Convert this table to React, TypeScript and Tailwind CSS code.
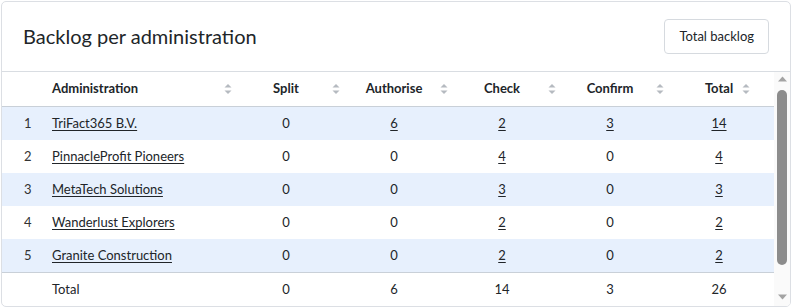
import React from "react";

const rows = [
  { n: 1, name: "TriFact365 B.V.", split: 0, auth: 6, check: 2, confirm: 3, total: 14 },
  { n: 2, name: "PinnacleProfit Pioneers", split: 0, auth: 0, check: 4, confirm: 0, total: 4 },
  { n: 3, name: "MetaTech Solutions", split: 0, auth: 0, check: 3, confirm: 0, total: 3 },
  { n: 4, name: "Wanderlust Explorers", split: 0, auth: 0, check: 2, confirm: 0, total: 2 },
  { n: 5, name: "Granite Construction", split: 0, auth: 0, check: 2, confirm: 0, total: 2 },
];

const grid = "grid grid-cols-[38px_192px_108px_108px_108px_108px_110px]";

function SortIcon() {
  return (
    <svg width="8" height="12" viewBox="0 0 8 12" className="block">
      <path d="M0.5 4.5 L4 1 L7.5 4.5 Z" fill="#b5bac0" />
      <path d="M0.5 7.5 L4 11 L7.5 7.5 Z" fill="#b5bac0" />
    </svg>
  );
}

function Val({ v, link }: { v: number; link: boolean }) {
  return (
    <div className="flex items-center justify-center">
      {link && v !== 0 ? <a className="underline underline-offset-2 cursor-pointer">{v}</a> : <span>{v}</span>}
    </div>
  );
}

function Head({ label, iconRight, align = "center" }: { label: string; iconRight: string; align?: "center" | "left" }) {
  return (
    <div className={`relative flex items-center ${align === "center" ? "justify-center" : "justify-start pl-[12px]"}`}>
      <span className="font-bold">{label}</span>
      <span className={`absolute top-1/2 -translate-y-1/2 ${iconRight}`}>
        <SortIcon />
      </span>
    </div>
  );
}

export default function App() {
  return (
    <div className="p-px" style={{ fontFamily: "Lato, 'Open Sans', sans-serif" }}>
      <div className="border border-[#dcdfe4] rounded-[5px] bg-white text-[#212529] overflow-hidden">
        <div className="h-[70px] border-b border-[#d9dde2] flex items-center justify-between pl-[21px] pr-[21px]">
          <h2 className="text-[20px] leading-none pb-[1px]">Backlog per administration</h2>
          <button className="h-[35px] px-[14px] border border-[#d6dadf] rounded-[4px] text-[13px] bg-white text-[#212529]">
            Total backlog
          </button>
        </div>
        <div className="flex text-[13px]">
          <div className="w-[772px]">
            <div className={`${grid} h-[35px] border-b border-[#c9d0d8]`}>
              <div />
              <Head label="Administration" align="left" iconRight="right-[0px]" />
              <Head label="Split" iconRight="right-[0px]" />
              <Head label="Authorise" iconRight="right-[0px]" />
              <Head label="Check" iconRight="right-[0px]" />
              <Head label="Confirm" iconRight="right-[0px]" />
              <Head label="Total" iconRight="right-[24px]" />
            </div>
            {rows.map((r, i) => (
              <div key={r.n} className={`${grid} h-[33px] ${i % 2 === 0 ? "bg-[#e7f0fd]" : "bg-white"}`}>
                <div className="flex items-center pl-[22px] text-[#333]">{r.n}</div>
                <div className="flex items-center pl-[12px]">
                  <a className="underline underline-offset-2 cursor-pointer">{r.name}</a>
                </div>
                <Val v={r.split} link />
                <Val v={r.auth} link />
                <Val v={r.check} link />
                <Val v={r.confirm} link />
                <Val v={r.total} link />
              </div>
            ))}
            <div className={`${grid} h-[34px] border-t border-[#c9d0d8]`}>
              <div />
              <div className="flex items-center pl-[12px]">Total</div>
              <Val v={0} link={false} />
              <Val v={6} link={false} />
              <Val v={14} link={false} />
              <Val v={3} link={false} />
              <Val v={26} link={false} />
            </div>
          </div>
          <div className="w-[16px] bg-[#fafafa] flex flex-col items-center pt-[4px] pb-[6px]">
            <svg width="9" height="6" viewBox="0 0 9 6" className="block shrink-0">
              <path d="M0 5.5 L4.5 0.5 L9 5.5 Z" fill="#a3a3a3" />
            </svg>
            <div className="mt-[8px] w-[10px] h-[175px] rounded-full bg-[#8c8c8c]" />
            <div className="flex-1" />
            <svg width="9" height="6" viewBox="0 0 9 6" className="block shrink-0">
              <path d="M0 0.5 L4.5 5.5 L9 0.5 Z" fill="#a3a3a3" />
            </svg>
          </div>
        </div>
      </div>
    </div>
  );
}
